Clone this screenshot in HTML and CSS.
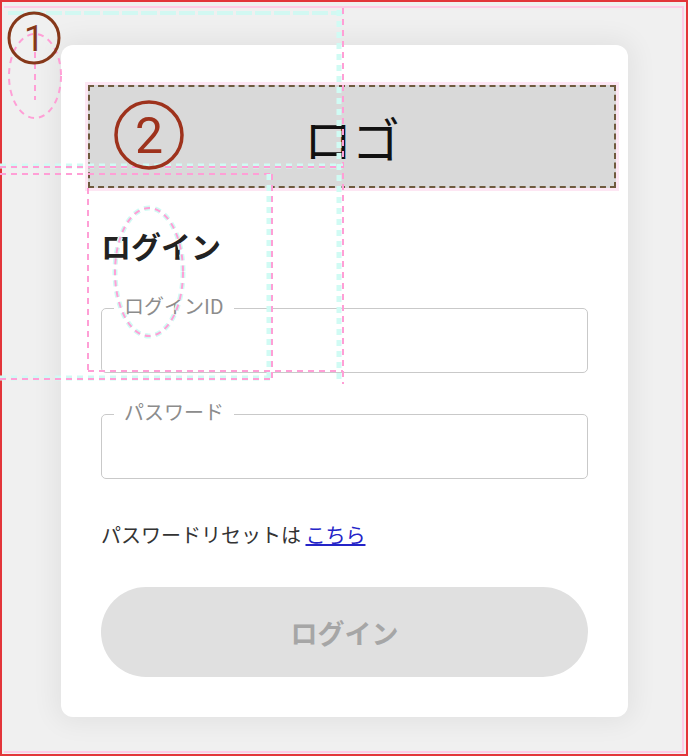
FILE: index.html
```html
<!DOCTYPE html>
<html lang="ja">
<head>
  <meta charset="UTF-8">
  <meta name="viewport" content="width=device-width, initial-scale=1.0">
  <title>ログイン</title>
  <link rel="stylesheet" href="styles.css">
</head>
<body>
  <div class="screen">
    <div class="login-card">
      <div class="logo">ロゴ</div>
      <h1 class="title">ログイン</h1>

      <fieldset class="field">
        <legend>ログインID</legend>
        <input type="text" id="loginId">
      </fieldset>

      <fieldset class="field field-pass">
        <legend>パスワード</legend>
        <input type="password" id="password">
      </fieldset>

      <p class="reset">パスワードリセットは <a href="#">こちら</a></p>

      <button class="login-button" disabled>ログイン</button>
    </div>
  </div>

  <!-- spec annotations drawn over the page -->
  <svg class="marks" width="688" height="756" viewBox="0 0 688 756">
    <rect x="1" y="1" width="686" height="754" fill="none" stroke="#e3353a" stroke-width="2"/>
    <path d="M4 7H683V752H4" fill="none" stroke="#ffcbe6" stroke-width="2"/>

    <path d="M8 13H343" stroke="#d2f8f2" stroke-width="4" stroke-dasharray="16 3"/>
    <path d="M339 10V384" class="cyan"/>
    <path d="M343 8V384" class="pink"/>

    <path d="M0 166H343" class="cyan"/>
    <path d="M0 167H343" class="pink"/>
    <path d="M0 174H272" class="pink"/>
    <path d="M269 174V380" class="cyan"/>
    <path d="M272 174V380" class="pink"/>
    <path d="M88 188V372" class="pink"/>
    <path d="M88 371H343" class="pink"/>
    <path d="M0 378H272" class="cyan"/>
    <path d="M0 379H272" class="pink"/>

    <ellipse cx="35" cy="76" rx="26" ry="42" class="pink"/>
    <path d="M35 52V100" class="pink"/>
    <ellipse cx="149" cy="272" rx="34" ry="64" class="cyan"/>
    <ellipse cx="149" cy="272" rx="34" ry="64" class="pink"/>

    <circle cx="34" cy="38" r="25" fill="none" stroke="#86381a" stroke-width="3"/>
    <text x="34" y="51" class="num num-1">1</text>
    <circle cx="149" cy="135" r="33" fill="none" stroke="#9e321c" stroke-width="3.5"/>
    <text x="149" y="153" class="num num-2">2</text>
  </svg>
</body>
</html>
```

FILE: styles.css
```css
body {
  margin: 0;
  width: 688px;
  height: 756px;
  overflow: hidden;
  position: relative;
  font-family: "Noto Sans CJK JP", "Noto Sans", sans-serif;
  background-color: #f0f0f0;
}
.screen {
  padding: 45px 60px 39px 61px;
}
.login-card {
  width: 567px;
  height: 672px;
  box-sizing: border-box;
  padding: 40px;
  background: white;
  border-radius: 12px;
  box-shadow: 0 0 26px 6px rgba(0,0,0,0.06);
  display: flex;
  flex-direction: column;
}
.logo {
  height: 103px;
  margin: 0 -28px 0 -13px;
  box-sizing: border-box;
  border: 2px dashed #6e5a3e;
  background-color: #d9d9d9;
  box-shadow: 0 0 0 3px #fde6f3;
  display: flex;
  align-items: center;
  justify-content: center;
  font-size: 48px;
  color: #111;
}
.title {
  margin: 36px 0 0;
  font-size: 30px;
  line-height: 42px;
  font-weight: bold;
  color: #222;
}
.field {
  margin: 29px 0 0;
  padding: 0 12px;
  border: 1px solid #c9c9c9;
  border-radius: 5px;
}
.field-pass {
  margin-top: 28px;
}
.field legend {
  margin-left: 0;
  padding: 0 10px 4px;
  font-size: 20px;
  line-height: 22px;
  color: #8c8c8c;
}
.field input {
  display: block;
  width: 100%;
  height: 51px;
  padding: 0;
  border: none;
  outline: none;
  background: transparent;
  font-size: 18px;
}
.reset {
  margin: 41px 0 0;
  font-size: 20px;
  line-height: 30px;
  color: #333;
}
.reset a {
  color: #2424c8;
}
.login-button {
  margin-top: 37px;
  height: 90px;
  border: none;
  border-radius: 45px;
  background-color: #e0e0e0;
  color: #a6a6a6;
  font-family: inherit;
  font-size: 27px;
  font-weight: bold;
}
.marks {
  position: absolute;
  left: 0;
  top: 0;
  pointer-events: none;
}
.pink {
  fill: none;
  stroke: #ff9fd6;
  stroke-width: 2;
  stroke-dasharray: 6 5;
}
.cyan {
  fill: none;
  stroke: #d0fbf4;
  stroke-width: 5;
  stroke-dasharray: 6 5;
}
.num {
  font-family: Roboto, "Noto Sans", sans-serif;
  text-anchor: middle;
}
.num-1 {
  font-size: 36px;
  fill: #86381a;
}
.num-2 {
  font-size: 50px;
  fill: #9e321c;
}
```
